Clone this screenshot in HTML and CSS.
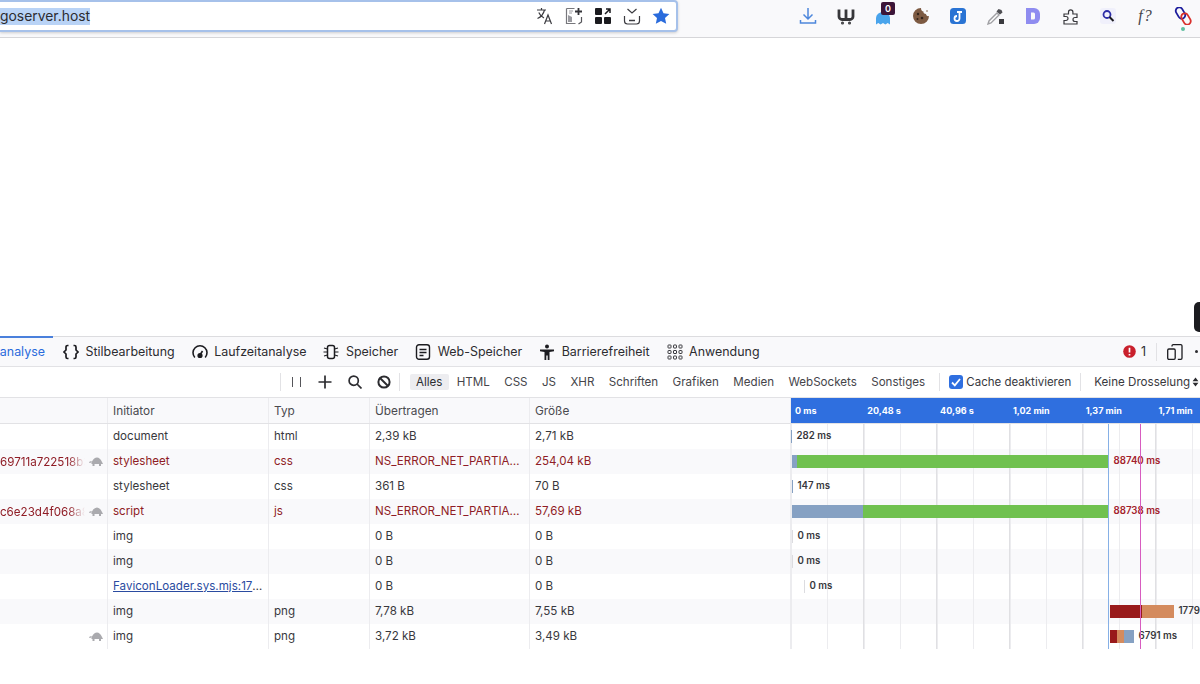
FILE: index.html
```html
<!DOCTYPE html>
<html lang="de">
<head>
<meta charset="utf-8">
<title>Netzwerkanalyse</title>
<link rel="stylesheet" href="styles.css">
</head>
<body>
<header class="toolbar">
  <div class="urlbar">
    <span class="url">goserver.host</span>
    <div class="url-icons">
      <svg class="ic18" viewBox="0 0 18 18" fill="none" stroke="#3b3b40" stroke-width="1.2"><path d="M1 3h9M5.5 1v2M8.5 3C7.500 7 5 10 1.500 11.500M2.800 5.500c1 2.500 3 4.500 5.200 5.500"/><path d="M8.500 17l3.500-9 3.500 9M10 14h4.500"/></svg>
      <svg class="ic18" viewBox="0 0 18 18" fill="none"><path d="M1.500 1.500h8M1.500 1.500v15h9" stroke="#77777c" stroke-width="1.200"/><path d="M3 8l4 2v5H3z" fill="#9a9aa0"/><path d="M4 4h4M4 6h3" stroke="#9a9aa0"/><path d="M13.500 1v7M10 4.500h7" stroke="#333338" stroke-width="1.800"/><path d="M16.500 10v5l-3 2" stroke="#55555a" stroke-width="1.200"/></svg>
      <svg class="ic18" viewBox="0 0 18 18"><rect x="1" y="1" width="7" height="7" rx="1" fill="#1b1b1f"/><rect x="1" y="10" width="7" height="7" rx="1" fill="#1b1b1f"/><rect x="10" y="10" width="7" height="7" rx="1" fill="#1b1b1f"/><path d="M11 7l5-5M12 2h4v4" stroke="#1b1b1f" stroke-width="1.500" fill="none"/></svg>
      <svg class="ic18" viewBox="0 0 18 18" fill="none" stroke="#3b3b40" stroke-width="1.200"><path d="M4.500 2l4.500 4 4.500-4"/><path d="M1.500 9v5a3 3 0 0 0 3 3h9a3 3 0 0 0 3-3V9"/><path d="M6 13.500h6" stroke-width="1.500"/></svg>
      <svg class="ic18" viewBox="0 0 18 18"><path d="M9 .8l2.500 5.400 5.900.7-4.400 4 1.200 5.900L9 13.900l-5.200 2.900L5 10.900l-4.400-4 5.900-.7z" fill="#2a6bdc"/></svg>
    </div>
  </div>
  <div class="addons">
    <svg class="ic18" viewBox="0 0 18 18" fill="none" stroke="#4d87dc" stroke-width="1.500"><path d="M9 1v11M4.500 7.500L9 12l4.500-4.500M1.500 13v3h15v-3"/></svg>
    <svg class="ic18" viewBox="0 0 18 18" fill="none" stroke="#37373a" stroke-width="2.800"><path d="M2 2.500v7a3 3 0 0 0 3 3h8a3 3 0 0 0 3-3v-7M9 2.500v9"/><circle cx="5.500" cy="16" r=".6" stroke-width="1.800"/><circle cx="12.500" cy="16" r=".6" stroke-width="1.800"/></svg>
    <span class="ghost">
      <svg class="ic18" viewBox="0 0 18 18"><path d="M2 17.500V11a7 6 0 0 1 14 0v6.500l-2.300-1.500-2.300 1.500L9 16l-2.400 1.500L4.300 16z" fill="#49a4ec"/></svg>
      <span class="badge">0</span>
    </span>
    <svg class="ic18" viewBox="0 0 18 18"><path d="M9 1a8 8 0 1 0 8 8c-1.500.500-3-.500-3-2-1.500 0-3-1-2.500-2.500C10 4.500 9 3 9 1z" fill="#7d5a42"/><circle cx="6" cy="7" r="1.200" fill="#32231a"/><circle cx="10" cy="11" r="1.300" fill="#32231a"/><circle cx="5.500" cy="12" r="1" fill="#32231a"/><circle cx="15" cy="4" r=".8" fill="#7d5a42"/></svg>
    <svg class="ic18" viewBox="0 0 18 18"><rect x="1" y="1" width="16" height="16" rx="3.500" fill="#2a74d4"/><path d="M10.500 4v7.500a2.500 2.500 0 1 1-2.500-2.500M8 5h5" fill="none" stroke="#fff" stroke-width="1.800"/></svg>
    <svg class="ic18" viewBox="0 0 18 18"><path d="M1 17l1-3 8-8 2 2-8 8z" fill="#fff" stroke="#a0a0a4" stroke-width="1.400"/><path d="M9.500 4.500l2-2.500 3 1 1 2.500-2.500 2z" fill="#505054"/><rect x="12" y="12" width="5" height="5" fill="#3a3a3e"/></svg>
    <svg class="ic18" viewBox="0 0 18 18"><path d="M2 1h8a6 6 0 0 1 6 6v4a6 6 0 0 1-6 6H2z" fill="#8f8cf0"/><path d="M7 5.500h2.500A1.500 1.500 0 0 1 11 7v4a1.500 1.500 0 0 1-1.500 1.500H7z" fill="#f9f9fb"/></svg>
    <svg class="ic18" viewBox="0 0 18 18" fill="none" stroke="#38383d" stroke-width="1.200"><path d="M2 7h4.500V5a2.200 2.200 0 0 1 4.400 0v2H15v3.500h-2a2 2 0 0 0 0 4h2V17H2v-3.500h2a2 2 0 0 0 0-4H2z"/></svg>
    <svg class="ic18" viewBox="0 0 18 18" fill="none"><rect x="1" y="1" width="16" height="16" rx="3" fill="#f0f0fb"/><circle cx="8" cy="7.500" r="3.500" stroke="#2c2ca8" stroke-width="1.800"/><path d="M10.500 10l4 4" stroke="#1b1b1f" stroke-width="2"/></svg>
    <span class="fq">f?</span>
    <span class="chain">
      <svg class="ic18" viewBox="0 0 18 18" fill="none" stroke-width="1.800"><rect x="-3.500" y="-6" width="7" height="12" rx="3.500" transform="translate(6.500 6) rotate(-30)" stroke="#1c1c9c"/><rect x="-3.500" y="-6" width="7" height="12" rx="3.500" transform="translate(12 12) rotate(-30)" stroke="#d9302c"/></svg>
      <span class="chain-dot"></span>
    </span>
  </div>
</header>

<main class="page">
  <span class="edge-tab"></span>
</main>

<section class="devtools">
  <nav class="tabs">
    <span class="tab tab-active">analyse</span>
    <span class="tab">
      <svg class="ic16" viewBox="0 0 16 16" fill="none" stroke="#1c1c20" stroke-width="1.700"><path d="M5.500 1.500H4.500a1.500 1.500 0 0 0-1.500 1.500v3L1 8l2 2v3a1.500 1.500 0 0 0 1.500 1.500h1M10.500 1.500h1A1.500 1.500 0 0 1 13 3v3l2 2-2 2v3a1.500 1.500 0 0 1-1.500 1.500h-1"/></svg>Stilbearbeitung</span>
    <span class="tab">
      <svg class="ic16" viewBox="0 0 16 16" fill="none" stroke="#1c1c20" stroke-width="1.600"><path d="M2.800 13.500a7 7 0 1 1 10.400 0"/><circle cx="8" cy="11.500" r="1.800" fill="#1c1c20"/><path d="M8 11l2.500-4"/></svg>Laufzeitanalyse</span>
    <span class="tab">
      <svg class="ic16" viewBox="0 0 16 16" fill="none" stroke="#1c1c20" stroke-width="1.200"><rect x="4.500" y="1.500" width="7" height="13" rx="2" stroke-width="1.500"/><path d="M1 4l3.500 1M.5 8h4M1 12l3.500-1M15 4l-3.500 1M15.500 8h-4M15 12l-3.500-1"/></svg>Speicher</span>
    <span class="tab">
      <svg class="ic16" viewBox="0 0 16 16" fill="none" stroke="#1c1c20" stroke-width="1.400"><rect x="1.500" y=".8" width="13" height="14.400" rx="2.500"/><path d="M4.500 5.500h7M4.500 8.500h7M4.500 11.500h4"/></svg>Web-Speicher</span>
    <span class="tab">
      <svg class="ic16" viewBox="0 0 16 16" fill="#1c1c20"><circle cx="8" cy="2.500" r="2"/><path d="M1 5.500h14v1.800l-4.500.7V16H8.700v-4.500H7.300V16H5.500V8L1 7.300z"/></svg>Barrierefreiheit</span>
    <span class="tab">
      <svg class="ic16" viewBox="0 0 16 16" fill="none" stroke="#38383d"><rect x="1" y="1" width="3" height="3" rx=".5"/><rect x="6.500" y="1" width="3" height="3" rx=".5"/><rect x="12" y="1" width="3" height="3" rx=".5"/><rect x="1" y="6.500" width="3" height="3" rx=".5"/><rect x="6.500" y="6.500" width="3" height="3" rx=".5"/><rect x="12" y="6.500" width="3" height="3" rx=".5"/><rect x="1" y="12" width="3" height="3" rx=".5"/><rect x="6.500" y="12" width="3" height="3" rx=".5"/><rect x="12" y="12" width="3" height="3" rx=".5"/></svg>Anwendung</span>
    <div class="tabs-end">
      <svg class="ic13" viewBox="0 0 13 13"><circle cx="6.500" cy="6.500" r="6.300" fill="#c9202c"/><path d="M6.500 2.800v4.600M6.500 8.900v1.500" stroke="#fff" stroke-width="1.700"/></svg>
      <span class="err-count">1</span>
      <span class="sep"></span>
      <svg class="ic16" viewBox="0 0 16 16" fill="none" stroke="#1c1c20" stroke-width="1.300"><rect x=".7" y="5" width="7.500" height="10.300" rx="1.200"/><path d="M5 2.500V1.800A1.200 1.200 0 0 1 6.200.7h7.600a1.200 1.200 0 0 1 1.200 1.100v12.300a1.200 1.200 0 0 1-1.200 1.200h-3"/></svg>
      <span class="more-dot"></span>
    </div>
  </nav>

  <div class="filters">
    <span class="sep"></span>
    <span class="pause"><i></i><i></i></span>
    <svg class="ic14" viewBox="0 0 14 14" stroke="#2c2c30" stroke-width="1.700"><path d="M7 .5v13M.5 7h13"/></svg>
    <svg class="ic14" viewBox="0 0 14 14" fill="none" stroke="#2c2c30" stroke-width="1.700"><circle cx="5.700" cy="5.700" r="4.600"/><path d="M9 9l4.500 4.500"/></svg>
    <svg class="ic14" viewBox="0 0 14 14" fill="none" stroke="#2c2c30" stroke-width="2"><circle cx="7" cy="7" r="5.600"/><path d="M3 3l8 8"/></svg>
    <span class="sep sep-chips"></span>
    <div class="chips">
      <span class="chip chip-on">Alles</span>
      <span class="chip">HTML</span>
      <span class="chip">CSS</span>
      <span class="chip">JS</span>
      <span class="chip">XHR</span>
      <span class="chip">Schriften</span>
      <span class="chip">Grafiken</span>
      <span class="chip">Medien</span>
      <span class="chip">WebSockets</span>
      <span class="chip">Sonstiges</span>
    </div>
    <span class="sep"></span>
    <label class="cache"><span class="check"><svg viewBox="0 0 14 14" fill="none" stroke="#fff" stroke-width="1.800"><path d="M3 7.500l2.800 2.800L11 4"/></svg></span>Cache deaktivieren</label>
    <span class="sep"></span>
    <span class="throttle">Keine Drosselung</span>
    <svg class="updown" viewBox="0 0 8 12" fill="#2c2c30"><path d="M4 .5L7.500 5h-7zM4 11.500L.5 7h7z"/></svg>
  </div>

  <div class="table">
    <div class="row head">
      <div class="cell c-file"></div>
      <div class="cell">Initiator</div>
      <div class="cell">Typ</div>
      <div class="cell">Übertragen</div>
      <div class="cell">Größe</div>
      <div class="scale">
        <span>0 ms</span><span>20,48 s</span><span>40,96 s</span><span>1,02 min</span><span>1,37 min</span><span>1,71 min</span>
      </div>
    </div>

    <div class="row">
      <div class="cell c-file"></div>
      <div class="cell">document</div><div class="cell">html</div><div class="cell">2,39 kB</div><div class="cell">2,71 kB</div>
      <div class="wf" style="padding-left:0"><i class="bar blue" style="width:1px"></i><b>282 ms</b></div>
    </div>
    <div class="row alt err">
      <div class="cell c-file"><span class="fname">69711a722518b3</span><svg class="turtle" viewBox="0 0 14 9" fill="#aaaaae"><path d="M0 5.500Q1 3.500 3 4.500 5 .5 8 .5t5 4.500l1 2H2.500v-2Q1 6.500 0 5.500zM3.500 7h2v2h-2zM10 7h2v2h-2z"/></svg></div>
      <div class="cell">stylesheet</div><div class="cell">css</div><div class="cell">NS_ERROR_NET_PARTIAL_TRANSFER</div><div class="cell">254,04 kB</div>
      <div class="wf" style="padding-left:1px"><i class="bar blue" style="width:5px"></i><i class="bar green" style="width:312px"></i><b>88740 ms</b></div>
    </div>
    <div class="row">
      <div class="cell c-file"></div>
      <div class="cell">stylesheet</div><div class="cell">css</div><div class="cell">361 B</div><div class="cell">70 B</div>
      <div class="wf" style="padding-left:1px"><i class="bar blue" style="width:1px"></i><b>147 ms</b></div>
    </div>
    <div class="row alt err">
      <div class="cell c-file"><span class="fname">c6e23d4f068a8</span><svg class="turtle" viewBox="0 0 14 9" fill="#aaaaae"><path d="M0 5.500Q1 3.500 3 4.500 5 .5 8 .5t5 4.500l1 2H2.500v-2Q1 6.500 0 5.500zM3.500 7h2v2h-2zM10 7h2v2h-2z"/></svg></div>
      <div class="cell">script</div><div class="cell">js</div><div class="cell">NS_ERROR_NET_PARTIAL_TRANSFER</div><div class="cell">57,69 kB</div>
      <div class="wf" style="padding-left:1px"><i class="bar blue" style="width:71px"></i><i class="bar green" style="width:246px"></i><b>88738 ms</b></div>
    </div>
    <div class="row">
      <div class="cell c-file"></div>
      <div class="cell">img</div><div class="cell"></div><div class="cell">0 B</div><div class="cell">0 B</div>
      <div class="wf" style="padding-left:1px"><i class="bar tick" style="width:1px"></i><b>0 ms</b></div>
    </div>
    <div class="row alt">
      <div class="cell c-file"></div>
      <div class="cell">img</div><div class="cell"></div><div class="cell">0 B</div><div class="cell">0 B</div>
      <div class="wf" style="padding-left:1px"><i class="bar tick" style="width:1px"></i><b>0 ms</b></div>
    </div>
    <div class="row">
      <div class="cell c-file"></div>
      <div class="cell"><span class="link">FaviconLoader.sys.mjs:175:20</span></div><div class="cell"></div><div class="cell">0 B</div><div class="cell">0 B</div>
      <div class="wf" style="padding-left:13px"><i class="bar tick" style="width:1px"></i><b>0 ms</b></div>
    </div>
    <div class="row alt">
      <div class="cell c-file"></div>
      <div class="cell">img</div><div class="cell">png</div><div class="cell">7,78 kB</div><div class="cell">7,55 kB</div>
      <div class="wf" style="padding-left:319px"><i class="bar red" style="width:32px"></i><i class="bar orange" style="width:32px"></i><b>17790 ms</b></div>
    </div>
    <div class="row">
      <div class="cell c-file"><svg class="turtle" viewBox="0 0 14 9" fill="#aaaaae"><path d="M0 5.500Q1 3.500 3 4.500 5 .5 8 .5t5 4.500l1 2H2.500v-2Q1 6.500 0 5.500zM3.500 7h2v2h-2zM10 7h2v2h-2z"/></svg></div>
      <div class="cell">img</div><div class="cell">png</div><div class="cell">3,72 kB</div><div class="cell">3,49 kB</div>
      <div class="wf" style="padding-left:319px"><i class="bar red" style="width:7px"></i><i class="bar orange" style="width:7px"></i><i class="bar blue" style="width:10px"></i><b>6791 ms</b></div>
    </div>

    <span class="marker marker-dom"></span>
    <span class="marker marker-load"></span>
  </div>
</section>
</body>
</html>
```

FILE: styles.css
```css
* { box-sizing: border-box; }

html, body {
  margin: 0;
  height: 684px;
  overflow: hidden;
  background: #fff;
  font-family: Inter, "Liberation Sans", sans-serif;
  color: #38383d;
}

svg { display: block; flex: none; }
.ic18 { width: 18px; height: 18px; }
.ic16 { width: 16px; height: 16px; }
.ic14 { width: 14px; height: 14px; }
.ic13 { width: 13px; height: 13px; }

/* browser toolbar */
.toolbar {
  height: 38px;
  display: flex;
  align-items: flex-start;
  background: #f9f9fb;
  border-bottom: 1px solid #d6d6d9;
}

.urlbar {
  width: 678px;
  height: 32px;
  display: flex;
  align-items: center;
  justify-content: space-between;
  padding-right: 6px;
  background: #fff;
  border: 2px solid #a6c1ea;
  border-left: 0;
  border-radius: 0 4px 4px 0;
  box-shadow: 0 1px 3px rgba(0, 0, 0, .18);
}

.url {
  font-size: 13.9px;
  line-height: 17px;
  color: #2c2c30;
  background: #b9d3f6;
}

.url-icons { display: flex; gap: 11px; }

.addons {
  display: flex;
  align-items: center;
  gap: 19.5px;
  height: 32px;
  margin-left: 121px;
}

.ghost, .chain { position: relative; display: block; }

.badge {
  position: absolute;
  left: 7px;
  top: -5px;
  width: 14px;
  height: 13px;
  border-radius: 2px;
  background: #3c1538;
  color: #fff;
  font-size: 9px;
  font-weight: 600;
  line-height: 13px;
  text-align: center;
}

.fq {
  width: 18px;
  font-family: "Liberation Serif", serif;
  font-style: italic;
  font-size: 16px;
  letter-spacing: 1px;
  color: #45454a;
  text-align: center;
}

.chain-dot {
  position: absolute;
  left: 7px;
  top: 20px;
  width: 4px;
  height: 4px;
  border-radius: 50%;
  background: #5fbf9f;
}

/* page */
.page {
  position: relative;
  height: 298px;
  background: #fff;
}

.edge-tab {
  position: absolute;
  right: 0;
  top: 264px;
  width: 6px;
  height: 30px;
  background: #1c1c20;
  border-radius: 5px 0 0 5px;
}

/* devtools */
.devtools { font-size: 11.6px; }

.tabs {
  height: 31px;
  display: flex;
  align-items: center;
  gap: 17px;
  background: #f9f9fb;
  border-top: 1px solid #dcdcdf;
  border-bottom: 1px solid #e2e2e5;
  font-size: 12.45px;
  color: #2c2c30;
}

.tab {
  display: flex;
  align-items: center;
  gap: 6.500px;
  white-space: nowrap;
}

.tab-active {
  position: relative;
  align-self: stretch;
  width: 45px;
  margin-right: 1px;
  justify-content: flex-end;
  color: #2a6bdc;
}

.tab-active::before {
  content: "";
  position: absolute;
  left: 0;
  top: -1px;
  width: 53px;
  height: 2px;
  background: #4a80dc;
}

.tabs-end {
  display: flex;
  align-items: center;
  margin-left: auto;
}

.err-count { margin: 0 10px 0 5px; }
.tabs-end .sep { margin-right: 10px; }

.more-dot {
  width: 3px;
  height: 3px;
  margin: 0 2px 0 12px;
  border-radius: 50%;
  background: #2c2c30;
}

.sep {
  width: 1px;
  height: 18px;
  flex: none;
  background: #e2e2e5;
}

.filters {
  height: 31px;
  display: flex;
  align-items: center;
  padding-left: 280px;
  border-bottom: 1px solid #e2e2e5;
}

.pause {
  display: flex;
  gap: 7px;
  margin: 0 17px 0 11px;
}

.pause i {
  width: 1px;
  height: 10px;
  background: #55555a;
}

.filters .ic14 + .ic14 { margin-left: 15.5px; }
.sep-chips { margin-left: 8px; }

.chips {
  display: flex;
  align-items: center;
  margin: 0 7px 0 10px;
  color: #45454a;
  white-space: nowrap;
}

.chip { padding: 0 7.2px; line-height: 16px; }
.chip-on { margin-right: 1px; background: #ededf0; color: #2c2c30; padding: 0 6px; border-radius: 2px; }

.cache {
  display: flex;
  align-items: center;
  gap: 3px;
  margin: 0 9px;
  font-size: 11.5px;
  white-space: nowrap;
  color: #38383d;
}

.check {
  display: block;
  width: 14px;
  height: 14px;
  background: #2f6fe0;
  border-radius: 3px;
}

.throttle { margin-left: 13px; white-space: nowrap; color: #38383d; }
.updown { width: 7px; height: 10px; margin-left: 2px; }

/* network table */
.table { position: relative; }

.row {
  display: grid;
  grid-template-columns: 108px 161px 101px 160px 261px 409px;
  height: 25px;
  line-height: 24px;
}

.alt { background: #f9f9fb; }
.err .cell { color: #8f1c25; }

.cell {
  min-width: 0;
  padding: 0 5px;
  border-right: 1px solid #ececef;
  white-space: nowrap;
  overflow: hidden;
  text-overflow: ellipsis;
}

.head {
  height: 26px;
  line-height: 26px;
  font-size: 11.8px;
  background: #f9f9fb;
  border-bottom: 1px solid #e2e2e5;
  color: #4a4a4f;
}

.c-file {
  display: flex;
  align-items: center;
  justify-content: flex-end;
  padding: 0 4px 0 0;
  text-overflow: clip;
}

.fname {
  flex: 1 1 0;
  min-width: 0;
  overflow: hidden;
  -webkit-mask-image: linear-gradient(90deg, #000 80%, transparent 100%);
  mask-image: linear-gradient(90deg, #000 80%, transparent 100%);
}

.turtle { width: 14px; height: 9px; margin-left: 4px; }

.link {
  color: #2a4ba0;
  text-decoration: underline;
}

.scale {
  display: grid;
  grid-template-columns: repeat(6, 72.8px);
  height: 25px;
  line-height: 25px;
  overflow: hidden;
  background: #2f6fdf;
  color: #fff;
  font-size: 9px;
  font-weight: 700;
  white-space: nowrap;
}

.scale span { padding-left: 3.500px; }
.scale span:first-child { padding-left: 4px; }

.wf {
  display: flex;
  align-items: center;
  min-width: 0;
  overflow: hidden;
  white-space: nowrap;
  background-image:
    repeating-linear-gradient(90deg, transparent 0 71.9px, #e0e0e3 71.9px 72.9px),
    repeating-linear-gradient(90deg, #ececef 0 1px, transparent 1px 36.45px);
}

.wf b {
  margin: 0 0 2px 4.500px;
  font-size: 9.7px;
  font-weight: 600;
  color: #38383d;
}

.err .wf b { color: #a3222c; }

.bar { display: block; flex: none; height: 13px; }
.blue { background: #86a1c3; }
.green { background: #70c14f; }
.red { background: #991a1b; }
.orange { background: #d48b5e; }
.tick { background: #dcdce0; }

.marker {
  position: absolute;
  top: 26px;
  bottom: 0;
  width: 1px;
}

.marker-dom { left: 1108px; background: #86b0e6; }
.marker-load { left: 1140px; background: #d75cc0; }
```
